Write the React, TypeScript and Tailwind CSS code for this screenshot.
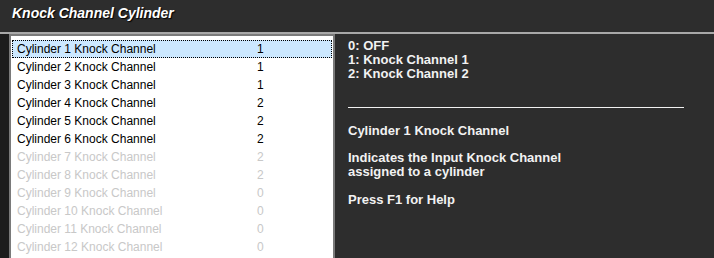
import React from 'react';

const rows = [
  { name: 'Cylinder 1 Knock Channel', value: 1, enabled: true },
  { name: 'Cylinder 2 Knock Channel', value: 1, enabled: true },
  { name: 'Cylinder 3 Knock Channel', value: 1, enabled: true },
  { name: 'Cylinder 4 Knock Channel', value: 2, enabled: true },
  { name: 'Cylinder 5 Knock Channel', value: 2, enabled: true },
  { name: 'Cylinder 6 Knock Channel', value: 2, enabled: true },
  { name: 'Cylinder 7 Knock Channel', value: 2, enabled: false },
  { name: 'Cylinder 8 Knock Channel', value: 2, enabled: false },
  { name: 'Cylinder 9 Knock Channel', value: 0, enabled: false },
  { name: 'Cylinder 10 Knock Channel', value: 0, enabled: false },
  { name: 'Cylinder 11 Knock Channel', value: 0, enabled: false },
  { name: 'Cylinder 12 Knock Channel', value: 0, enabled: false },
];

export default function App() {
  return (
    <div className="w-[714px] h-[258px] overflow-hidden bg-[#2d2d2d] flex flex-col font-['Liberation_Sans',Arial,sans-serif]">
      {/* Title bar */}
      <div className="h-[32px] shrink-0 pl-[12px] pt-[1px]">
        <span className="text-[14px] font-bold italic text-white [text-shadow:1px_1px_1px_#000]">
          Knock Channel Cylinder
        </span>
      </div>
      <div className="h-[2px] shrink-0 bg-[#a8a8a8]" />

      <div className="flex flex-1 min-h-0">
        {/* Parameter list */}
        <div className="w-[9px] shrink-0 bg-[#1c1c1c]" />
        <div className="w-[326px] shrink-0 border-l-2 border-r-2 border-t-2 border-[#7a7a7a] bg-white pt-[4px] pl-[1px] pr-[1px]">
          {rows.map((r, i) => (
            <div
              key={r.name}
              className={`h-[18px] flex items-center text-[12px] leading-none ${
                i === 0 ? 'bg-[#cce8ff] border border-dotted border-black' : 'border border-transparent'
              } ${r.enabled ? 'text-black' : 'text-[#c8c8c8]'}`}
            >
              <span className="w-[244px] pl-[4px]">{r.name}</span>
              <span>{r.value}</span>
            </div>
          ))}
        </div>

        {/* Help panel */}
        <div className="flex-1 pl-[13px] pt-[5px] text-[13px] font-bold text-[#f2f2f2] leading-[14px]">
          <div>0: OFF</div>
          <div>1: Knock Channel 1</div>
          <div>2: Knock Channel 2</div>
          <div className="mt-[26px] mr-[30px] h-[1px] bg-[#f0f0f0]" />
          <div className="mt-[16px]">Cylinder 1 Knock Channel</div>
          <div className="mt-[13px]">Indicates the Input Knock Channel</div>
          <div>assigned to a cylinder</div>
          <div className="mt-[14px]">Press F1 for Help</div>
        </div>
      </div>
    </div>
  );
}
